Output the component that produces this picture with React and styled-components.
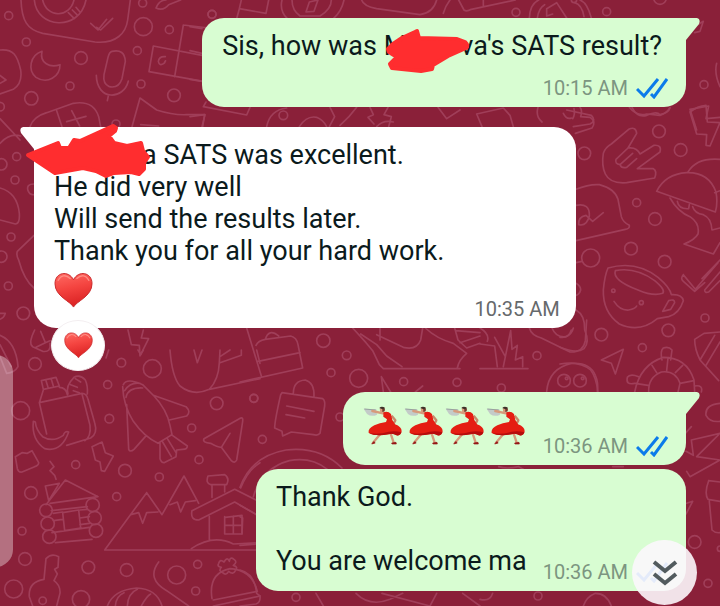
import React from "react";
import styled, { createGlobalStyle, css } from "styled-components";

const GlobalStyle = createGlobalStyle`
  * { box-sizing: border-box; }
  body {
    margin: 0;
    background: #8a2039;
    font-family: Roboto, "Liberation Sans", sans-serif;
  }
`;

const Chat = styled.main`
  position: relative;
  min-height: 100vh;
  overflow: hidden;
  background: #8a2039;
`;

const WallpaperArt = styled.svg`
  position: absolute;
  inset: 0;
  width: 100%;
  height: 100%;
  fill: none;
  stroke: #a03e59;
  stroke-width: 5;
  stroke-linecap: round;
  stroke-linejoin: round;
`;

const Thread = styled.div`
  position: relative;
  display: flex;
  flex-direction: column;
  padding: 18px 34px 15px;
`;

const Bubble = styled.article`
  position: relative;
  display: flex;
  flex-direction: ${(p) => (p.$stacked ? "column" : "row")};
  align-items: flex-end;
  gap: ${(p) => (p.$stacked ? "14px" : p.$incoming ? "30px" : "16px")};
  align-self: ${(p) => (p.$incoming ? "flex-start" : "flex-end")};
  margin-top: ${(p) => p.$gap || 0}px;
  padding: 12px ${(p) => (p.$incoming ? 16 : 18)}px 7px 20px;
  border-radius: 22px;
  background: ${(p) => (p.$incoming ? "#ffffff" : "#d8fdd2")};
  ${(p) =>
    p.$tail &&
    (p.$incoming
      ? css`border-top-left-radius: 0;`
      : css`border-top-right-radius: 0;`)}
`;

const TailShape = styled.svg`
  position: absolute;
  top: 0;
  ${(p) => (p.$incoming ? "left: -14px; transform: scaleX(-1);" : "right: -14px;")}
  width: 15px;
  height: 24px;
  fill: ${(p) => (p.$incoming ? "#ffffff" : "#d8fdd2")};
`;

const Message = styled.p`
  margin: 0;
  padding-right: ${(p) => (p.$stacked ? 6 : 0)}px;
  padding-bottom: ${(p) => (p.$flush ? 0 : 7)}px;
  color: #0b1a1c;
  font-size: 27px;
  line-height: 32px;
  white-space: pre-line;
`;

const EmojiRow = styled.div`
  display: flex;
  padding-bottom: 13px;
`;

const Emoji = styled.svg`
  display: block;
  width: ${(p) => p.$size}px;
  height: ${(p) => p.$size}px;
  flex: none;
`;

const HeartLine = styled.span`
  display: flex;
  align-items: center;
  height: 47px;
`;

const Meta = styled.footer`
  display: flex;
  align-items: center;
  gap: 8px;
  flex: none;
  color: ${(p) => (p.$incoming ? "#66696b" : "#7c9580")};
  font-size: 20px;
  line-height: 24px;
`;

const TickArt = styled.svg`
  width: 32px;
  height: 22px;
  fill: none;
  stroke: #0b7bea;
  stroke-width: 3;
`;

const Hidden = styled.span`
  position: relative;
  display: inline-block;
  width: ${(p) => p.$width}px;
  height: 20px;
`;

const ScribbleArt = styled.svg`
  position: absolute;
  z-index: 1;
  left: ${(p) => p.$left}px;
  top: ${(p) => p.$top}px;
  fill: #ff2d2f;
  stroke: #ff2d2f;
  stroke-width: 4;
  stroke-linejoin: round;
`;

const Reaction = styled.button`
  position: absolute;
  left: 17px;
  bottom: -43px;
  display: grid;
  place-items: center;
  width: 54px;
  height: 51px;
  padding: 0;
  border: 1px solid #f3eef0;
  border-radius: 50%;
  background: #ffffff;
`;

const EdgeHandle = styled.div`
  position: absolute;
  left: -22px;
  top: 355px;
  width: 35px;
  height: 212px;
  border-radius: 20px;
  background: rgba(255, 255, 255, 0.36);
`;

const ScrollDown = styled.button`
  position: absolute;
  right: 23px;
  bottom: 1px;
  display: grid;
  place-items: center;
  width: 65px;
  height: 65px;
  padding: 0;
  border: 0;
  border-radius: 50%;
  background: rgba(252, 247, 252, 0.9);
`;

/* Each tile holds outline drawings in its own coordinates, three units per pixel. */
const tiles = [
  {
    x: 0, y: 0,
    d: [
      "M63 0C65 62 82 90 128 100L285 126C350 132 378 98 383 60L391 0",
      "M103 0C110 86 238 96 258 0M128 0C140 54 208 56 222 0M205 38l18 18M217 30l16 16M228 22l10 12",
      "M272 70l22 20 26-32M290 82l12 8 36-35",
      "M126 154C90 166 82 210 108 232C142 254 180 230 180 194C150 204 118 190 126 154Z",
      "M336 154Q374 146 376 184L366 236Q356 266 328 260Q308 252 312 224L324 172Q328 156 336 154Z",
      "M289 226C290 304 372 300 385 243M325 288l-3 14",
      "M610 167L460 138L447 215L610 244M550 75L524 230M550 75L640 86",
      "M496 170Q478 168 475 184Q478 200 492 190Q500 176 494 188",
      "M0 150C40 146 52 166 62 210Q68 250 40 268L0 282M0 226l18 14-18 10",
      "M90 380Q100 350 140 338L220 310Q280 300 296 350L302 380M170 332l16 48M215 332l24 46M200 365l58-16",
      "M396 380L420 294L470 330Q520 346 560 344L615 344L606 380M422 374l54 4",
      "M468 24Q478 0 498 0M468 24Q490 34 506 14L542 0",
      "M0 356L60 420M0 430Q30 398 62 408",
    ],
    c: [[26, 47, 12], [79, 126, 12], [243, 174, 19], [412, 152, 12], [430, 80, 27], [508, 89, 12], [428, 9, 12], [210, 258, 12], [423, 252, 12], [94, 295, 20], [522, 286, 19], [636, 43, 12], [0, 320, 13], [348, 372, 12]],
  },
  {
    x: 190, y: 0,
    d: [
      "M0 80l36 6M0 152l36 8M0 238l36 6M154 0L148 26L228 40L236 0M148 26l-8 30",
      "M276 0C270 24 280 44 292 56M462 0C456 28 446 42 430 56M306 0C306 22 316 38 330 48L390 48C410 36 424 18 424 0M348 36l10-30 26-6-12 34Z",
      "M515 0Q520 18 560 26L690 44Q730 38 740 0M780 0q-14 18-20 40",
      "M48 306L40 320L170 345L180 322M0 350L44 344L38 380",
      "M230 380Q240 330 290 324M328 380Q350 346 380 352Q400 360 410 380",
      "M420 322L434 350L418 380M450 376Q480 350 500 322M540 322L550 344L534 352L552 372M594 322L582 344L604 350L596 380",
      "M744 322L770 356L810 330M560 380Q580 358 610 366",
    ],
    c: [[66, 43, 12], [280, 346, 13]],
  },
  {
    x: 450, y: 0,
    d: [
      "M26 0L42 30Q50 36 64 28L196 0M100 0v18",
      "M238 54Q240 12 266 0M424 54Q412 8 390 0M262 54Q266 24 284 14M402 50Q396 14 374 8M290 26L320 8L350 54M290 26v22l18-6",
      "M800 190Q792 220 810 260M720 328L740 390M720 328L776 318L768 356L810 352",
      "M538 322Q560 350 590 342L630 346Q650 340 660 322",
      "M80 342L160 324L180 346L190 380M80 342L96 380M264 322Q256 350 276 366M350 330L424 346Q440 362 420 372L370 380",
      "M740 76l20-12-10 30-16 4",
    ],
    c: [[198, 37, 12], [470, 35, 12], [630, -6, 19], [762, 254, 12], [372, 0, 8]],
  },
  {
    x: 0, y: 110,
    d: [
      "M0 234C38 244 54 270 58 310Q60 342 46 342L0 330",
      "M102 376L52 424Q48 436 56 450Q72 510 102 534",
      "M102 222Q78 222 84 242Q90 256 102 254M0 610h16Q12 624 0 628",
      "M104 660Q84 700 98 710L128 724Q154 728 150 700M122 664l14 34 14-6M136 698l-28 14",
      "M384 660L394 704L418 706L420 738L446 686L424 684L430 660",
      "M0 676Q48 696 54 770Q44 788 20 790M0 704L34 770M0 740L20 790",
    ],
    c: [[50, 140, 12], [4, 163, 17], [45, 210, 12], [33, 381, 12], [4, 440, 17], [25, 528, 12], [70, 610, 19]],
  },
  {
    x: 560, y: 100,
    d: [
      "M46 100L96 84Q110 64 90 52L62 50Q68 30 60 22M10 40Q20 60 34 54M38 56Q46 44 42 26",
      "M216 22Q232 54 260 46Q290 32 300 44Q326 38 330 24",
      "M130 160Q136 142 154 132L206 88Q228 78 230 100L204 144Q230 140 240 162L282 136Q306 134 300 156L232 206L280 206Q292 212 284 234L200 248Q150 252 136 222Q124 196 130 160M204 144L168 178Q164 192 180 194L218 160M180 194Q184 206 200 202L230 176",
      "M48 268Q86 252 118 254Q164 266 174 298L184 350Q188 366 208 376Q210 386 196 388L48 422M48 316Q90 308 88 348Q80 380 56 374Q54 350 78 346L98 364L130 338",
      "M390 36Q412 18 438 16L442 66L480 68L450 138L438 136L440 104L410 102Z",
      "M480 178Q410 172 384 216M290 274Q316 222 380 218Q446 216 468 276Q474 310 466 336ZM330 294Q354 336 390 350Q420 370 414 402Q404 420 372 432L460 462L480 428M352 304Q356 328 386 326L388 314M398 320Q404 340 430 344Q454 354 456 390L480 384M464 278L480 272",
      "M370 524L406 568L474 488M370 524Q360 536 370 544L404 574L434 548M480 516L434 570Q434 580 446 576L480 542M426 536L480 480",
      "M144 504Q228 480 294 532Q330 562 334 584Q366 582 370 602Q358 640 326 650L292 656Q240 700 178 672Q128 636 130 570Q134 526 144 504ZM166 512Q226 500 284 542Q318 570 308 580Q280 590 234 570Q156 540 166 512ZM326 602Q344 596 344 608L332 628L308 634ZM162 604Q180 632 206 630Q226 626 230 618",
      "M48 630Q76 646 74 690Q90 726 72 746Q50 762 0 742M0 712Q26 716 34 690",
      "M124 780L190 748L166 822L154 790ZM0 792Q60 782 92 810Q108 830 114 876",
      "M306 780Q300 752 310 744Q326 738 336 750L332 780M224 876Q240 794 310 772Q380 772 402 840L404 876M266 876Q264 832 304 816Q346 810 360 850L354 876M324 774l-4 38M276 796l14 22M226 850l38 6M368 796l-22 22M402 842l-42 8M224 850Q196 856 202 832Q210 820 236 830",
      "M480 696L432 700L404 718Q404 748 420 780L476 842M420 780L464 706M438 796L480 726M48 488L66 484M48 550Q62 558 62 570Q58 584 48 586M404 858Q430 854 424 876",
    ],
    c: [[297, 94, 19], [362, 150, 19], [73, 160, 19], [230, 308, 12], [285, 357, 19], [213, 446, 19], [92, 474, 27], [314, 485, 19], [435, 654, 12], [325, 691, 19], [124, 704, 19], [247, 743, 12], [12, 842, 19], [60, 842, 19], [160, 572, 5], [244, 608, 6], [20, 835, 4], [68, 835, 4]],
  },
  {
    x: 0, y: 350,
    d: [
      "M124 92L168 82L178 108L130 118ZM138 92l6 20M154 88l6 20M130 120L118 158L140 252M118 158L246 130Q260 130 264 148L284 218Q294 250 272 264L200 286M178 112Q198 112 202 134M204 132Q196 108 222 82Q240 72 256 90Q264 108 262 132M212 104l20 8M226 86l16 10M220 122l18 6M246 132L270 226Q274 260 254 272M100 214Q94 268 134 296Q184 308 206 246Q194 242 190 256Q158 278 128 260Q108 240 106 216Z",
      "M370 104Q380 82 428 104L462 138Q500 178 510 226L516 254L474 280Q432 260 400 214Q370 166 368 110M378 142Q384 112 428 114M374 122Q390 96 420 100M460 136L558 170Q574 186 560 198L508 210M380 164L386 298Q390 308 402 298L436 260M514 254L562 288Q562 298 548 298L530 300L528 320L492 338Q484 338 480 326V280M488 276l26 44M502 266l26 42",
      "M612 266L722 204Q730 202 728 214L710 330Q704 342 694 332L664 292Q652 292 632 280Q606 278 612 266ZM664 292L690 250",
      "M276 290L306 276L316 308L340 318L314 364L304 362L300 336L286 330ZM46 320L66 308L82 310L96 302L116 338Q116 346 104 350L66 366Q56 368 52 356Z",
      "M150 334L162 350L150 362L164 376L168 388M136 408L178 400L146 452ZM138 464L196 390L294 440L150 460M154 482L262 470M160 512L188 508M240 504L268 500M156 548L268 532M166 578L276 568M188 488L236 480L242 534L194 542ZM160 490L188 486M240 480L262 478M240 524L268 520",
      "M440 428L314 600H780M440 428L486 494L552 378L596 460M392 494L416 488L428 520L440 488L474 486M510 464L532 456L542 486L556 456L586 452",
      "M632 404Q616 400 624 378L674 374Q690 384 680 404ZM636 404V442M674 406V426M576 482L704 418L780 456M576 482Q570 510 596 510L704 456L780 500M628 500V570M676 502L726 496V552H674V500M674 526H726M700 498V552M574 596Q640 552 700 582L780 578M722 414Q744 360 780 338",
      "M138 626Q154 608 176 620L174 652L164 658L172 672L162 692Q182 706 180 730L170 768M138 626L132 688Q84 696 88 740L98 768",
      "M322 768Q340 720 410 714Q470 716 486 768M346 768Q348 738 372 728M382 768Q384 730 412 718M424 768Q440 738 452 732M476 636C450 670 460 700 500 722L566 768",
      "M636 746Q624 670 690 656Q756 660 772 724L640 750M640 768L780 738M672 636Q660 626 656 640Q650 650 664 652Q654 664 668 668Q678 678 686 664Q700 676 706 662Q716 650 700 646Q714 636 702 628Q690 618 688 634Q682 618 672 636Z",
      "M510 0Q516 80 540 108Q580 140 628 118Q656 88 658 38L660 0M628 118L780 86M582 0L592 38L606 0M660 38L724 16V0M660 20L690 0M414 0l8 14 8-14M326 0l-8 24M770 0l10 40",
    ],
    c: [[105, 42, 19], [364, 38, 13], [457, 56, 27], [323, 104, 12], [62, 182, 27], [328, 206, 13], [650, 160, 19], [762, 145, 12], [575, 234, 12], [227, 344, 12], [375, 362, 19], [597, 329, 12], [478, 381, 12], [93, 429, 19], [350, 440, 12], [66, 543, 12], [75, 627, 19], [265, 652, 19], [380, 660, 19], [593, 643, 12], [530, 675, 27], [41, 717, 27], [587, 723, 12], [243, 748, 26], [138, 481, 19], [143, 521, 20], [148, 560, 20], [278, 465, 20], [284, 504, 20], [288, 542, 20], [128, 752, 11]],
  },
  {
    x: 240, y: 310,
    d: [
      "M20 54L64 198M0 216L188 174M48 106Q54 92 76 88L152 78Q170 82 174 104L188 174M54 154L180 128M76 88Q86 54 116 78",
      "M126 248L248 266Q256 272 254 288L240 370Q234 378 220 374L154 366L128 378L126 364L104 354Q104 334 122 254ZM160 250Q160 212 196 210Q224 218 222 260M140 288L222 304M138 314L194 324",
      "M0 532Q34 438 138 420Q240 408 306 474M40 560Q66 474 148 452Q214 440 262 478M0 586L50 614M0 620L8 624L6 672M0 706L50 702M0 780Q44 790 50 850L60 858Q62 878 48 882L0 888",
      "M338 54L378 98L398 122L418 164L430 176H660M362 72L410 104L440 138L486 170M410 74L490 112Q530 122 542 90L548 54M424 200L430 246M424 200L452 246M526 246L548 228M420 54v36",
      "M556 54Q590 86 640 100L680 130Q656 150 652 174M644 54L654 90L680 114L720 100M646 62l74 6M660 98L720 78",
      "M228 850L250 888M348 850Q390 892 450 868L488 850M426 850L570 888L590 850M668 850L720 888",
    ],
    c: [[250, 92, 20], [320, 136, 13], [273, 188, 12], [356, 205, 27], [491, 215, 12], [651, 217, 12], [41, 265, 12], [300, 321, 12], [67, 388, 12], [168, 862, 12]],
  },
  {
    x: 480, y: 320,
    d: [
      "M0 72L44 78L52 140M0 24Q30 42 22 64M44 52L76 110M70 140L92 32L96 88L112 76L106 120L128 110V140M0 146H144M148 24Q154 46 184 54L270 96Q310 98 316 62L320 0M216 24Q228 54 258 50Q276 42 280 24",
      "M200 214Q206 146 274 130Q330 126 346 166Q356 188 352 214",
      "M720 250Q674 254 678 286Q690 308 720 304M618 394L640 406L634 360L720 340L650 410L720 420L630 470L620 454M616 340L634 320M686 482L720 486M686 482Q672 520 684 538L720 544M688 544L696 630Q706 640 720 638M620 550L638 544L618 582",
      "M0 838Q30 846 38 820M310 858Q320 830 346 820Q380 820 394 858M56 440Q80 448 116 440L130 448M398 440h32",
    ],
    c: [[171, 107, 12], [64, 204, 12], [644, 666, 19], [684, 790, 12], [174, 828, 12], [720, 686, 8]],
  },
];

const Wallpaper = () => (
  <WallpaperArt viewBox="0 0 720 606" preserveAspectRatio="xMinYMin slice" aria-hidden="true">
    {tiles.map((t) => (
      <g key={`${t.x}-${t.y}`} transform={`translate(${t.x} ${t.y}) scale(0.33333)`}>
        {t.d.map((d) => <path key={d} d={d} />)}
        {t.c.map(([cx, cy, r]) => <circle key={`${cx}-${cy}`} cx={cx} cy={cy} r={r} />)}
      </g>
    ))}
  </WallpaperArt>
);

const Tail = ({ incoming }) => (
  <TailShape $incoming={incoming} viewBox="0 0 15 24" aria-hidden="true">
    <path d="M0 0H12Q16 1 14 6L1 22V24H0Z" />
  </TailShape>
);

const Ticks = () => (
  <TickArt viewBox="0 0 32 22" role="img" aria-label="Read">
    <path d="M1 12L8 19L22 2M15 17L18 20L31 2" />
  </TickArt>
);

const Heart = ({ size }) => (
  <Emoji $size={size} viewBox="0 0 40 40" role="img" aria-label="Red heart">
    <defs>
      <linearGradient id={`heart-${size}`} x1="0" y1="0" x2="0.25" y2="1">
        <stop offset="0" stopColor="#ff6a63" />
        <stop offset="0.5" stopColor="#f44440" />
        <stop offset="1" stopColor="#dc2425" />
      </linearGradient>
    </defs>
    <path
      d="M20 37C17 31 1 26 1 13C1 1 15-1 20 9C25-1 39 1 39 13C39 26 23 31 20 37Z"
      fill={`url(#heart-${size})`}
      stroke="#c92a2c"
      strokeWidth="1"
    />
    <path d="M4 10Q9 1 17 8M23 8Q31 1 36 10" fill="none" stroke="#ff8c83" strokeWidth="1.5" />
  </Emoji>
);

const Dancer = () => (
  <Emoji $size={41} viewBox="42 30 123 123" role="img" aria-label="Dancer">
    <path d="M44 44L82 46L84 62Q68 70 54 60Z" fill="#c3cbc8" />
    <path d="M46 45L80 48" stroke="#96a19e" strokeWidth="3" />
    <path d="M70 51L102 58M96 118L72 146M124 116L134 146" fill="none" stroke="#d69b7b" strokeWidth="7" strokeLinecap="round" />
    <path d="M128 65L139 79L132 92" fill="none" stroke="#c7886a" strokeWidth="7" strokeLinejoin="round" />
    <path d="M103 55Q117 50 126 60L130 78L138 91Q158 98 158 112Q156 126 143 124Q132 116 119 121Q78 128 59 117Q56 104 76 94Q92 86 111 84L114 76L103 68Z" fill="#e51d12" />
    <path d="M61 116Q84 124 119 113Q140 110 157 115Q154 126 142 124Q131 116 118 121Q78 128 61 116Z" fill="#b60c0d" />
    <circle cx="101" cy="47" r="7" fill="#743a2d" />
    <path d="M92 43h8v12h-6Z" fill="#d69b7b" />
    <path d="M91 42Q98 35 108 42L101 46Z" fill="#3d3029" />
    <path d="M75 142L68 150L79 147M128 147L141 145L142 150H129Z" fill="#941615" stroke="#941615" strokeWidth="2" />
  </Emoji>
);

const NameScribble = () => (
  <ScribbleArt $left={-23} $top={-7} width="88" height="48" viewBox="386 29 88 48" aria-hidden="true">
    <path d="M417 33L419 32L421 39L459 40L467 43Q471 47 468 49L450 57L435 66L434 70L423 72L394 69L392 65L399 58L391 53L390 50L395 45L404 39Z" />
  </ScribbleArt>
);

const LongScribble = () => (
  <ScribbleArt $left={-30} $top={-23} width="130" height="60" viewBox="25 122 130 60" aria-hidden="true">
    <path d="M29 156L59 144L61 149L70 149L75 141L81 142L114 127L117 129L116 132L110 137L115 144L128 147L142 144L144 152L149 158L145 164L145 170L140 175L132 173L115 174L107 177L97 172L84 169L56 174Z" />
  </ScribbleArt>
);

const Stamp = ({ time, incoming }) => (
  <Meta $incoming={incoming}>
    <time>{time}</time>
    {!incoming && <Ticks />}
  </Meta>
);

export default function App() {
  return (
    <>
      <GlobalStyle />
      <Chat>
        <Wallpaper />
        <Thread>
          <Bubble $stacked $tail>
            <Tail />
            <Message $stacked $flush>
              Sis, how was M<Hidden $width={53}><NameScribble /></Hidden>va's SATS result?
            </Message>
            <Stamp time="10:15 AM" />
          </Bubble>

          <Bubble $incoming $tail $gap={20}>
            <Tail incoming />
            <Message>
              <Hidden $width={88}><LongScribble /></Hidden>
              {"a SATS was excellent.\nHe did very well\nWill send the results later.\nThank you for all your hard work."}
              <HeartLine><Heart size={39} /></HeartLine>
            </Message>
            <Stamp time="10:35 AM" incoming />
            <Reaction aria-label="1 heart reaction"><Heart size={29} /></Reaction>
          </Bubble>

          <Bubble $tail $gap={64}>
            <Tail />
            <EmojiRow><Dancer /><Dancer /><Dancer /><Dancer /></EmojiRow>
            <Stamp time="10:36 AM" />
          </Bubble>

          <Bubble $gap={4}>
            <Message>{"Thank God.\n\nYou are welcome ma"}</Message>
            <Stamp time="10:36 AM" />
          </Bubble>
        </Thread>
        <EdgeHandle />
        <ScrollDown aria-label="Scroll to latest message">
          <svg width="26" height="28" viewBox="0 0 26 28" fill="none" stroke="#525b5e" strokeWidth="4" aria-hidden="true">
            <path d="M2 3L13 12L24 3M2 15L13 24L24 15" />
          </svg>
        </ScrollDown>
      </Chat>
    </>
  );
}
